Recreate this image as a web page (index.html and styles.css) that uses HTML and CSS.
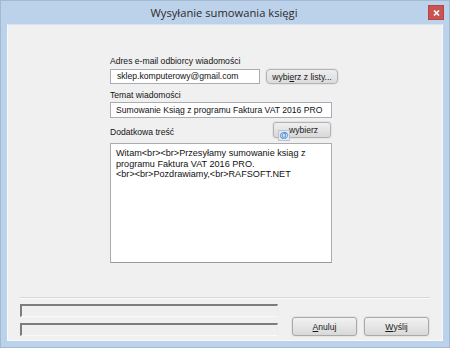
FILE: index.html
```html
<!DOCTYPE html>
<html lang="pl">
<head>
<meta charset="utf-8">
<title>Wysyłanie sumowania księgi</title>
<link rel="stylesheet" href="styles.css">
</head>
<body>
<div class="window">
  <div class="titlebar">
    <span class="title">Wysyłanie sumowania księgi</span>
    <span class="close"><svg width="7" height="6" viewBox="0 0 7 6"><path d="M1 0.5 L6 5.5 M6 0.5 L1 5.5" stroke="#fff" stroke-width="1.6"/></svg></span>
  </div>
  <div class="client">
    <div class="form">
      <div class="label l1">Adres e-mail odbiorcy wiadomości</div>
      <div class="row r1">
        <div class="input email">sklep.komputerowy@gmail.com</div>
        <div class="btn pick">wybi<u>e</u>rz z listy...</div>
      </div>
      <div class="label l2">Temat wiadomości</div>
      <div class="input subject">Sumowanie Ksiąg z programu Faktura VAT 2016 PRO</div>
      <div class="row r3">
        <div class="label l3">Dodatkowa treść</div>
        <div class="btn choose"><span class="at">@</span><span class="choose-text">wybierz</span></div>
      </div>
      <div class="textarea">Witam&lt;br&gt;&lt;br&gt;Przesyłamy sumowanie ksiąg z programu Faktura VAT 2016 PRO.<br>&lt;br&gt;&lt;br&gt;Pozdrawiamy,&lt;br&gt;RAFSOFT.NET</div>
    </div>
    <div class="footer">
      <div class="sep"></div>
      <div class="bottom">
        <div class="status">
          <div class="sbox"></div>
          <div class="sbox"></div>
        </div>
        <div class="buttons">
          <div class="btn act"><u>A</u>nuluj</div>
          <div class="btn act"><u>W</u>yślij</div>
        </div>
      </div>
    </div>
  </div>
</div>
</body>
</html>
```
FILE: styles.css
```css
html, body {
  margin: 0;
  padding: 0;
  background: #bcd2ea;
}
body {
  width: 450px;
  height: 348px;
  overflow: hidden;
  font-family: "Liberation Sans", Arial, sans-serif;
  font-size: 8.6px;
  color: #141414;
}
.window {
  box-sizing: border-box;
  width: 450px;
  height: 348px;
  border: 1px solid #a3b9d2;
  background: #bcd2ea;
  display: flex;
  flex-direction: column;
  padding: 0 6px 6px 6px;
}
.titlebar {
  height: 23px;
  display: flex;
  align-items: center;
  justify-content: center;
  position: relative;
}
.title {
  font-family: "Open Sans", "Noto Sans", sans-serif;
  font-size: 11.2px;
  color: #2b2b2b;
  margin-top: -1px;
  margin-left: -2px;
}
.close {
  position: absolute;
  right: -1px;
  top: 4px;
  width: 16px;
  height: 15px;
  background: #c85352;
  border: 1px solid #b84543;
  box-sizing: border-box;
  display: flex;
  align-items: center;
  justify-content: center;
}
.client {
  flex: 1;
  background: #f0f0f0;
  border: 1px solid #f7f9fc;
  border-top-color: #d8e3f0;
  display: flex;
  flex-direction: column;
}
.form {
  margin-left: 102px;
  width: 222px;
  padding-top: 30px;
  display: flex;
  flex-direction: column;
}
.label {
  line-height: 12px;
  height: 12px;
  white-space: nowrap;
}
.row {
  display: flex;
  align-items: center;
}
.r1 {
  margin-top: 2px;
  width: 230px;
}
.input {
  box-sizing: border-box;
  background: #fff;
  border: 1px solid #a9acb2;
  height: 15px;
  line-height: 13px;
  padding-left: 6px;
  white-space: nowrap;
  overflow: hidden;
  color: #111;
}
.email {
  width: 150px;
}
.btn {
  box-sizing: border-box;
  border: 1px solid #acacac;
  border-radius: 3px;
  background: linear-gradient(#f4f4f4, #e6e6e6 50%, #dadada);
  display: flex;
  align-items: center;
  justify-content: center;
  white-space: nowrap;
  color: #1a1a1a;
  box-shadow: 0 0 0 1px #e4e4e4;
}
.pick {
  margin-left: 6px;
  width: 72px;
  height: 15px;
  border-radius: 4px;
  border-color: #b4b4b4;
  background: linear-gradient(#eeeeee, #dcdcdc);
}
.l2 {
  margin-top: 5px;
}
.subject {
  margin-top: 1px;
  width: 222px;
  height: 16px;
  line-height: 14px;
  padding-left: 5px;
}
.r3 {
  margin-top: 4px;
  height: 17px;
  justify-content: space-between;
  align-items: flex-end;
}
.l3 {
  margin-bottom: 1px;
}
.choose {
  position: relative;
  width: 58px;
  height: 16px;
  margin-right: 1px;
  margin-bottom: 1px;
  justify-content: flex-start;
  border-color: #b2b2b2;
  background: linear-gradient(#f0f0f0, #d8d8d8);
}
.at {
  position: absolute;
  left: 4px;
  top: 7px;
  width: 10px;
  height: 9px;
  background: #e4e9ef;
  border: 1px solid #b9c4d0;
  color: #2f7fd0;
  font-size: 9px;
  line-height: 9px;
  text-align: center;
  font-weight: bold;
}
.choose-text {
  margin-left: 15px;
}
.textarea {
  box-sizing: border-box;
  margin-top: 4px;
  width: 222px;
  height: 120px;
  background: #fff;
  border: 1px solid #a9acb2;
  border-bottom-color: #9a9a9a;
  padding: 4px 4px 0 5px;
  line-height: 10.7px;
  font-size: 9.1px;
  color: #111;
}
.footer {
  margin-top: auto;
  padding: 0 12px 4px 12px;
}
.sep {
  height: 1px;
  background: #d7d7d7;
  border-bottom: 1px solid #fbfbfb;
}
.bottom {
  margin-top: 5px;
  display: flex;
  align-items: flex-end;
}
.status {
  display: flex;
  flex-direction: column;
  gap: 6px;
}
.sbox {
  box-sizing: border-box;
  width: 258px;
  height: 13px;
  border-top: 2px solid #7d7d7d;
  border-left: 2px solid #7d7d7d;
  border-right: 1px solid #ececec;
  border-bottom: 1px solid #fafafa;
  background: #efefef;
}
.buttons {
  margin-left: 14px;
  display: flex;
  gap: 7px;
}
.act {
  width: 65px;
  height: 19px;
  border-color: #a9a9a9;
  background: linear-gradient(#f2f2f2, #e6e6e6 50%, #d8d8d8);
}
```
